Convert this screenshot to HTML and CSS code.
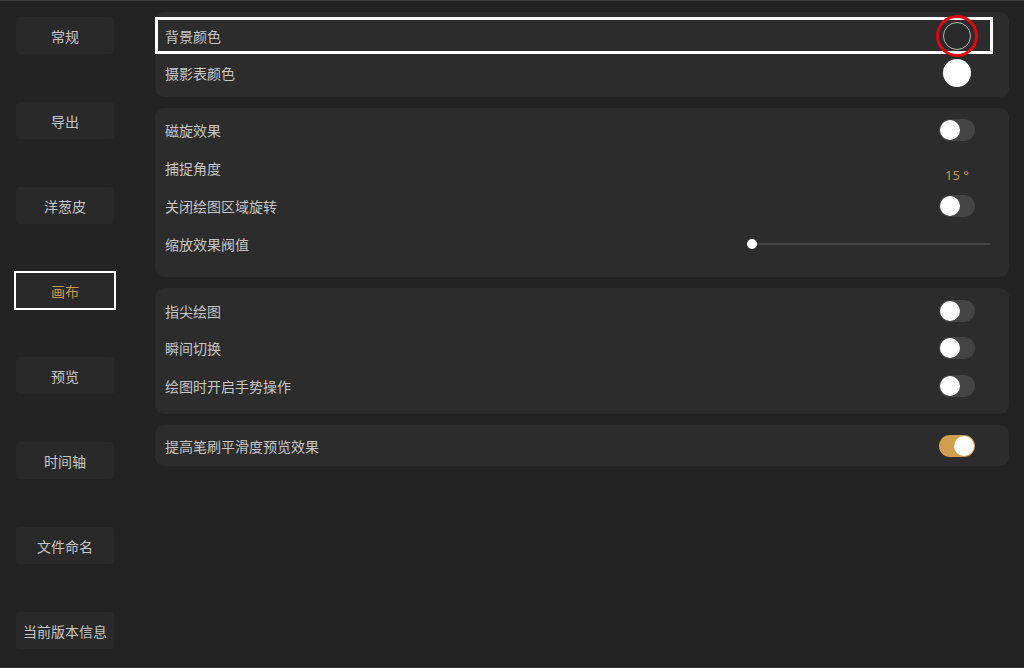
FILE: index.html
```html
<!DOCTYPE html>
<html lang="zh-CN">

<head>
    <meta charset="UTF-8">
    <meta name="viewport" content="width=device-width, initial-scale=1.0">
    <title>设置 - 画布</title>
    <link rel="stylesheet" href="styles.css">
</head>

<body>
    <div class="settings-page">
        <div class="side-menu">
            <div class="menu-item">常规</div>
            <div class="menu-item">导出</div>
            <div class="menu-item">洋葱皮</div>
            <div class="menu-item active">画布</div>
            <div class="menu-item">预览</div>
            <div class="menu-item">时间轴</div>
            <div class="menu-item">文件命名</div>
            <div class="menu-item">当前版本信息</div>
        </div>

        <div class="settings-main">
            <div class="panel panel-colors">
                <div class="row marked">
                    <span class="label">背景颜色</span>
                    <div class="control">
                        <div class="swatch dark"></div>
                        <div class="red-ring"></div>
                    </div>
                </div>
                <div class="row">
                    <span class="label">摄影表颜色</span>
                    <div class="control">
                        <div class="swatch white"></div>
                    </div>
                </div>
            </div>

            <div class="panel panel-canvas">
                <div class="row">
                    <span class="label">磁旋效果</span>
                    <div class="control"><div class="toggle"></div></div>
                </div>
                <div class="row">
                    <span class="label">捕捉角度</span>
                    <div class="control"><span class="angle">15 °</span></div>
                </div>
                <div class="row">
                    <span class="label">关闭绘图区域旋转</span>
                    <div class="control"><div class="toggle"></div></div>
                </div>
                <div class="row">
                    <span class="label">缩放效果阀值</span>
                    <div class="slider">
                        <div class="slider-knob"></div>
                    </div>
                </div>
            </div>

            <div class="panel panel-touch">
                <div class="row">
                    <span class="label">指尖绘图</span>
                    <div class="control"><div class="toggle"></div></div>
                </div>
                <div class="row">
                    <span class="label">瞬间切换</span>
                    <div class="control"><div class="toggle"></div></div>
                </div>
                <div class="row">
                    <span class="label">绘图时开启手势操作</span>
                    <div class="control"><div class="toggle"></div></div>
                </div>
            </div>

            <div class="panel panel-single">
                <div class="row">
                    <span class="label">提高笔刷平滑度预览效果</span>
                    <div class="control"><div class="toggle on"></div></div>
                </div>
            </div>
        </div>
    </div>
</body>

</html>
```

FILE: styles.css
```css
:root {
    --page: #232323;
    --panel: #2c2c2c;
    --button: #292929;
    --text: #c6c6c6;
    --accent: #c9964b;
    --track: #444444;
}

* {
    margin: 0;
    padding: 0;
    box-sizing: border-box;
}

body {
    background: var(--page);
    color: var(--text);
    font-family: "Noto Sans CJK SC", "Noto Sans", sans-serif;
    font-size: 14px;
    width: 1024px;
    height: 668px;
    overflow: hidden;
}

.settings-page {
    display: flex;
    height: 668px;
    border-top: 1px solid #3a3a3a;
    border-bottom: 1px solid #3a3a3a;
}

/* Left menu */
.side-menu {
    width: 155px;
    flex-shrink: 0;
    padding: 16px 0 0 16px;
    display: flex;
    flex-direction: column;
    gap: 48px;
}

.menu-item {
    width: 98px;
    height: 37px;
    background: var(--button);
    border-radius: 4px;
    display: flex;
    align-items: center;
    justify-content: center;
}

.menu-item.active {
    width: 102px;
    height: 39px;
    margin-left: -2px;
    margin-top: -1px;
    margin-bottom: -1px;
    border: 2px solid #ffffff;
    border-radius: 0;
    color: var(--accent);
}

/* Right settings */
.settings-main {
    flex: 1;
    padding: 11px 15px 0 0;
    display: flex;
    flex-direction: column;
    gap: 11px;
}

.panel {
    background: var(--panel);
    border-radius: 9px;
    padding: 5px 16px 5px 0;
}

.panel-colors {
    padding-bottom: 6px;
}

.panel-canvas {
    padding-top: 3px;
    padding-bottom: 14px;
}

.panel-touch {
    padding-top: 4px;
    padding-bottom: 10px;
}

.panel-single {
    padding-top: 2px;
    padding-bottom: 2px;
}

.row {
    height: 37px;
    padding: 0 18px 0 10px;
    display: flex;
    align-items: center;
    justify-content: space-between;
}

.panel-canvas .row {
    height: 38px;
}

.panel-touch .row:nth-child(2) {
    height: 38px;
}

.row.marked {
    outline: 3px solid #ffffff;
    outline-offset: -3px;
}

.label {
    line-height: 20px;
}

.control {
    width: 36px;
    height: 28px;
    position: relative;
    display: flex;
    align-items: center;
    justify-content: center;
}

.swatch {
    width: 28px;
    height: 28px;
    border-radius: 50%;
}

.swatch.dark {
    background: #2a2a2a;
    border: 1.5px solid #b8b8b8;
}

.swatch.white {
    background: #ffffff;
}

/* annotation ring over the background colour swatch */
.red-ring {
    position: absolute;
    left: -3px;
    top: -7px;
    width: 42px;
    height: 42px;
    border: 3px solid #e8000b;
    border-radius: 50%;
}

.toggle {
    width: 36px;
    height: 22px;
    border-radius: 11px;
    background: var(--track);
    position: relative;
}

.toggle::after {
    content: "";
    position: absolute;
    left: 1px;
    top: 1px;
    width: 20px;
    height: 20px;
    border-radius: 50%;
    background: #ffffff;
}

.toggle.on {
    background: #d19d4f;
}

.toggle.on::after {
    left: 15px;
}

.angle {
    color: var(--accent);
    font-family: "Noto Sans", sans-serif;
    font-size: 13px;
    margin-top: 14px;
    white-space: nowrap;
}

.slider {
    width: 243px;
    height: 2px;
    margin-right: -15px;
    background: var(--track);
    position: relative;
}

.slider-knob {
    position: absolute;
    left: 0;
    top: -4px;
    width: 10px;
    height: 10px;
    border-radius: 50%;
    background: #ffffff;
}
```
